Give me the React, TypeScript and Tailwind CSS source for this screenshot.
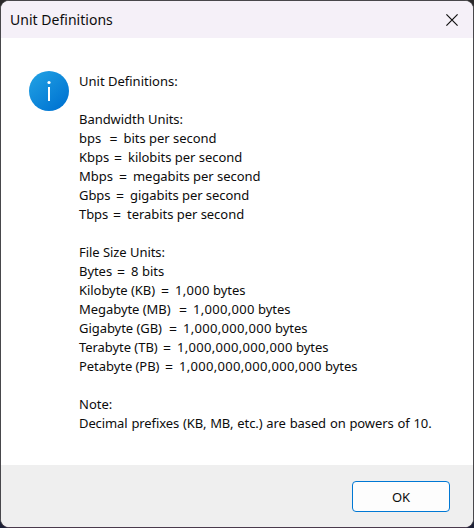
type Line = { text: string; style?: string } | { term: string; width: string; value: string; unit: string };

const lines: Line[] = [
  { text: 'Unit Definitions:' },
  { text: '' },
  { text: 'Bandwidth Units:', style: 'tracking-[-0.05px]' },
  { term: 'bps  ', width: 'w-[30.6px]', value: '', unit: 'bits per second' },
  { term: 'Kbps ', width: 'w-[35px]', value: '', unit: 'kilobits per second' },
  { term: 'Mbps ', width: 'w-[40px]', value: '', unit: 'megabits per second' },
  { term: 'Gbps ', width: 'w-[37px]', value: '', unit: 'gigabits per second' },
  { term: 'Tbps ', width: 'w-[34px]', value: '', unit: 'terabits per second' },
  { text: '' },
  { text: 'File Size Units:', style: 'tracking-[-0.05px]' },
  { term: 'Bytes ', width: 'w-[38px]', value: '8', unit: ' bits' },
  { term: 'Kilobyte (KB) ', width: 'w-[82px]', value: '1,000', unit: ' bytes' },
  { term: 'Megabyte (MB) ', width: 'w-[100px]', value: '1,000,000', unit: ' bytes' },
  { term: 'Gigabyte (GB) ', width: 'w-[90px]', value: '1,000,000,000', unit: ' bytes' },
  { term: 'Terabyte (TB) ', width: 'w-[84px]', value: '1,000,000,000,000', unit: ' bytes' },
  { term: 'Petabyte (PB) ', width: 'w-[86px]', value: '1,000,000,000,000,000', unit: ' bytes' },
  { text: '' },
  { text: 'Note:' },
  {
    text: 'Decimal prefixes (KB, MB, etc.) are based on powers of 10.',
    style: 'tracking-[-0.1px] [word-spacing:0.6px]',
  },
];

export default function App() {
  return (
    <div className="h-[528px] w-[474px] bg-linear-to-b from-[#2b292b] from-80% to-[#1c2036] font-['Segoe_UI','Noto_Sans',sans-serif] text-[#0c0c0c]">
      <div className="flex h-[528px] w-[474px] flex-col overflow-hidden rounded-[9px] border border-[#48474b] border-b-[#4a3a4c] bg-white">
        <header className="flex h-[37px] shrink-0 items-center justify-between bg-[#f5f0f8] pr-[15px] pl-[9px]">
          <h1 className="text-[14px] leading-[20px] tracking-[0.02px] whitespace-pre">Unit Definitions</h1>
          <svg className="h-3 w-3" viewBox="0 0 12 12" fill="none" stroke="#111" strokeWidth="1.2">
            <path d="M.4.4l11.2 11.2M11.6.4L.4 11.6" />
          </svg>
        </header>
        <main className="flex flex-1 gap-[10px] pt-[33px] pl-[28px]">
          <svg className="h-10 w-10 shrink-0" viewBox="0 0 40 40">
            <defs>
              <linearGradient id="info" x1="0.15" y1="0.1" x2="0.85" y2="0.9">
                <stop offset="0" stopColor="#1e9de2" />
                <stop offset="1" stopColor="#0074d2" />
              </linearGradient>
            </defs>
            <circle cx="20" cy="20" r="20" fill="url(#info)" />
            <circle cx="20" cy="11.5" r="1.6" fill="#fff" />
            <rect x="19" y="16" width="2" height="14" fill="#fff" />
          </svg>
          <div className="pt-px text-[13px] leading-[19px] whitespace-pre">
            {lines.map((line, i) =>
              'text' in line ? (
                <p key={i} className={`h-[19px] ${line.style ?? ''}`}>
                  {line.text}
                </p>
              ) : (
                <p key={i} className="flex h-[19px]">
                  <span className={`shrink-0 tracking-[-0.05px] ${line.width}`}>{line.term}</span>
                  <span className="w-[14px] shrink-0 text-[14px]">{'= '}</span>
                  <span className="tracking-[0.3px]">{line.value}</span>
                  <span className="tracking-[-0.04px]">{line.unit}</span>
                </p>
              ),
            )}
          </div>
        </main>
        <footer className="flex h-[62px] shrink-0 items-start justify-end bg-[#efefef] pt-[16px] pr-[23px]">
          <button className="h-[31px] w-[98px] rounded-[4px] border border-[#0078d4] bg-[#fdfdfd] pt-px text-[13px] leading-[29px]">
            OK
          </button>
        </footer>
      </div>
    </div>
  );
}
